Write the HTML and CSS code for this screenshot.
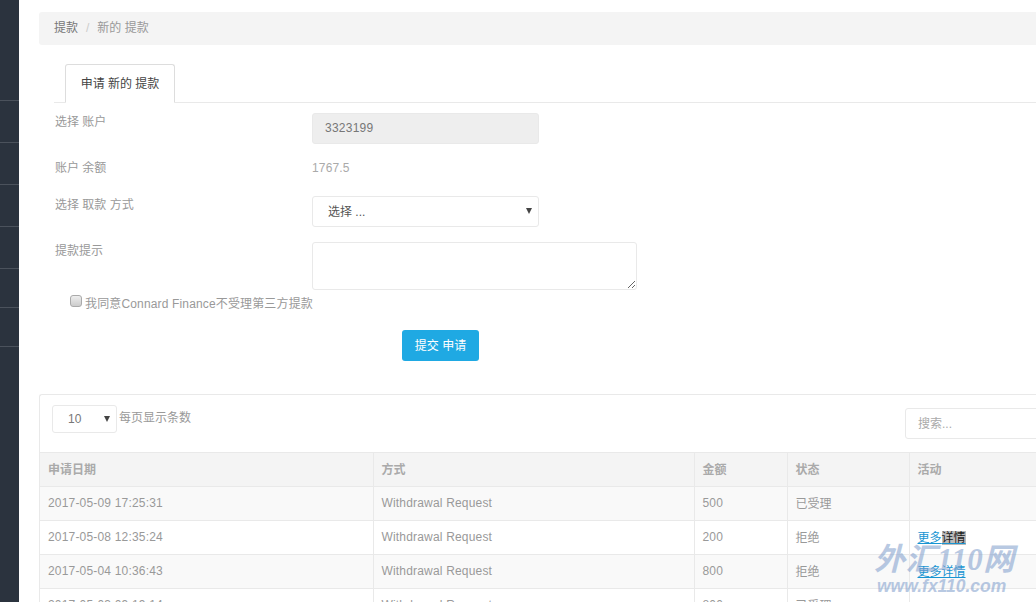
FILE: index.html
```html
<!DOCTYPE html>
<html lang="zh">
<head>
<meta charset="utf-8">
<title>新的 提款</title>
<link rel="stylesheet" href="styles.css">
</head>
<body>
<div class="app">
  <aside class="sidebar">
    <div class="side-item side-first"></div>
    <div class="side-item"></div>
    <div class="side-item"></div>
    <div class="side-item"></div>
    <div class="side-item"></div>
    <div class="side-item side-short"></div>
    <div class="side-item side-short"></div>
  </aside>
  <main class="main">
    <nav class="breadcrumb"><span class="crumb">提款</span><span class="crumb-sep">/</span><span class="crumb-active">新的 提款</span></nav>
    <div class="tabs"><div class="tab">申请 新的 提款</div></div>
    <form class="form">
      <div class="row row-account">
        <label class="label">选择 账户</label>
        <input class="control control-short" type="text" value="3323199" disabled>
      </div>
      <div class="row row-balance">
        <label class="label">账户 余额</label>
        <span class="static">1767.5</span>
      </div>
      <div class="row row-method">
        <label class="label">选择 取款 方式</label>
        <div class="select-wrap select-wrap-method"><select class="control control-short select-method"><option>选择 ...</option></select></div>
      </div>
      <div class="row row-note">
        <label class="label">提款提示</label>
        <textarea class="control textarea"></textarea>
      </div>
      <div class="agree"><input class="check" type="checkbox"><span>我同意Connard Finance不受理第三方提款</span></div>
      <div class="actions"><button class="btn" type="button">提交 申请</button></div>
    </form>
    <section class="panel">
      <div class="toolbar">
        <div class="length"><div class="select-wrap select-wrap-length"><select class="control select-length"><option>10</option></select></div><span class="length-text">每页显示条数</span></div>
        <input class="control search" type="text" placeholder="搜索...">
      </div>
      <table class="table">
        <thead>
          <tr><th class="c1">申请日期</th><th class="c2">方式</th><th class="c3">金额</th><th class="c4">状态</th><th class="c5">活动</th></tr>
        </thead>
        <tbody>
          <tr><td>2017-05-09 17:25:31</td><td>Withdrawal Request</td><td>500</td><td class="cjk">已受理</td><td class="cjk"></td></tr>
          <tr><td>2017-05-08 12:35:24</td><td>Withdrawal Request</td><td>200</td><td class="cjk">拒绝</td><td class="cjk"><a class="link" href="#">更多<span class="selected">详情</span></a></td></tr>
          <tr><td>2017-05-04 10:36:43</td><td>Withdrawal Request</td><td>800</td><td class="cjk">拒绝</td><td class="cjk"><a class="link" href="#">更多详情</a></td></tr>
          <tr><td>2017-05-03 09:19:14</td><td>Withdrawal Request</td><td>800</td><td class="cjk">已受理</td><td class="cjk"></td></tr>
        </tbody>
      </table>
    </section>
  </main>
</div>
<div class="watermark"><div class="wm-title">外汇110网</div><div class="wm-url">www.fx110.com</div></div>
</body>
</html>
```
FILE: styles.css
```css
* { box-sizing: border-box; }
html, body { margin: 0; height: 100%; overflow: hidden; background: #fff; }
body { font: 12px/16px "Liberation Sans", "Noto Sans CJK SC", sans-serif; color: #999; }
.app { display: flex; width: 1036px; height: 602px; overflow: hidden; }
.sidebar { flex: 0 0 19px; background: #2b333e; }
.side-item { height: 42px; border-bottom: 1px solid #4b525c; }
.side-first { height: 101px; }
.side-short { height: 39px; }
.main { flex: 0 0 1100px; padding: 12px 0 0 20px; }
.breadcrumb { height: 33px; padding-left: 15px; background: #f4f4f4; border-radius: 3px; line-height: 33px; color: #999; }
.crumb { color: #777; }
.crumb-sep { padding: 0 8px; color: #ccc; }
.crumb-active { color: #999; }
.tabs { margin: 19px 0 0 15px; height: 39px; border-bottom: 1px solid #e9e9e9; }
.tab { width: 110px; height: 39px; margin-left: 11px; border: 1px solid #ddd; border-bottom-color: #fff; border-radius: 3px 3px 0 0; background: #fff; color: #444; text-align: center; line-height: 38px; }
.form { padding-left: 15px; }
.row { display: grid; grid-template-columns: 258px 1fr; align-items: start; }
.label { display: block; padding: 1px 0 0 1px; color: #999; }
.row-account { margin-top: 10px; }
.row-balance { margin-top: 15px; }
.row-method { margin-top: 20px; }
.row-note { margin-top: 15px; }
.control { display: block; font: inherit; color: #777; border: 1px solid #e9e9e9; border-radius: 3px; background: #fff; }
.control-short { width: 227px; height: 31px; }
.row-account .control { padding: 0 12px 2px; background: #eee; letter-spacing: .25px; }
.static { padding-top: 1px; color: #aaa; letter-spacing: .15px; }
.select-wrap { position: relative; }
.select-wrap::after { content: ""; position: absolute; border-style: solid; border-width: 6px 3px 0; border-color: #444 transparent transparent; pointer-events: none; }
.select-wrap-method { width: 227px; }
.select-wrap-method::after { top: 12px; right: 7px; }
.select-wrap-length { width: 65px; }
.select-wrap-length::after { top: 11px; right: 7px; }
.select-method, .select-length { appearance: none; }
.select-method { padding-left: 15px; color: #555; }
.textarea { width: 325px; height: 48px; padding: 6px 12px; }
.agree { display: flex; align-items: center; height: 16px; margin: 5px 0 0 16px; padding-top: 1px; color: #999; letter-spacing: .15px; }
.agree span { margin-left: 3px; }
.check { appearance: none; width: 12px; height: 12px; margin: -6px 0 0; border: 1px solid #aaa; border-radius: 3px; background: linear-gradient(#eee, #ccc); }
.actions { margin: 19px 0 0 348px; }
.btn { display: block; width: 77px; height: 31px; padding: 0; border: 0; border-radius: 3px; background: #1fa9e3; color: #fff; font: inherit; }
.panel { width: 1100px; margin-top: 33px; border: 1px solid #e9e9e9; border-right: 0; border-radius: 3px 0 0 0; background: #fff; }
.toolbar { display: flex; justify-content: space-between; height: 57px; padding: 10px 44px 10px 12px; }
.length { display: flex; align-items: flex-start; }
.select-length { width: 65px; height: 28px; padding-left: 15px; }
.length-text { margin: 5px 0 0 2px; }
.search { width: 190px; height: 31px; margin: 3px 0 0 0; padding: 0 12px; }
.search::placeholder { color: #aaa; }
.table { width: 1099px; border-collapse: collapse; table-layout: fixed; }
.table th, .table td { height: 34px; padding: 0 8px; border: 1px solid #e9e9e9; text-align: left; font-weight: normal; color: #999; }
.table td { padding-bottom: 2px; letter-spacing: .18px; }
.table td.cjk { padding-bottom: 0; letter-spacing: 0; }
.table tr > :first-child { border-left: 0; }
.table th { font-weight: bold; color: #aaa; background: #f4f4f4; }
.table tbody tr:nth-child(odd) { background: #f9f9f9; }
.c1 { width: 333px; }
.c2 { width: 321px; }
.c3 { width: 93px; }
.c4 { width: 122px; }
.link { color: #1895d2; text-decoration: underline; }
.selected { background: #bbb; color: #222; }
.watermark { position: absolute; left: 874px; top: 544px; width: 150px; color: #7f9dcc; opacity: .55; pointer-events: none; }
.wm-title { font: italic bold 31px/32px "Liberation Serif", "Noto Sans CJK SC", serif; letter-spacing: .5px; white-space: nowrap; }
.wm-url { margin: 1px 0 0 3px; font: italic bold 17.5px/18px "Liberation Sans", sans-serif; white-space: nowrap; }
```
